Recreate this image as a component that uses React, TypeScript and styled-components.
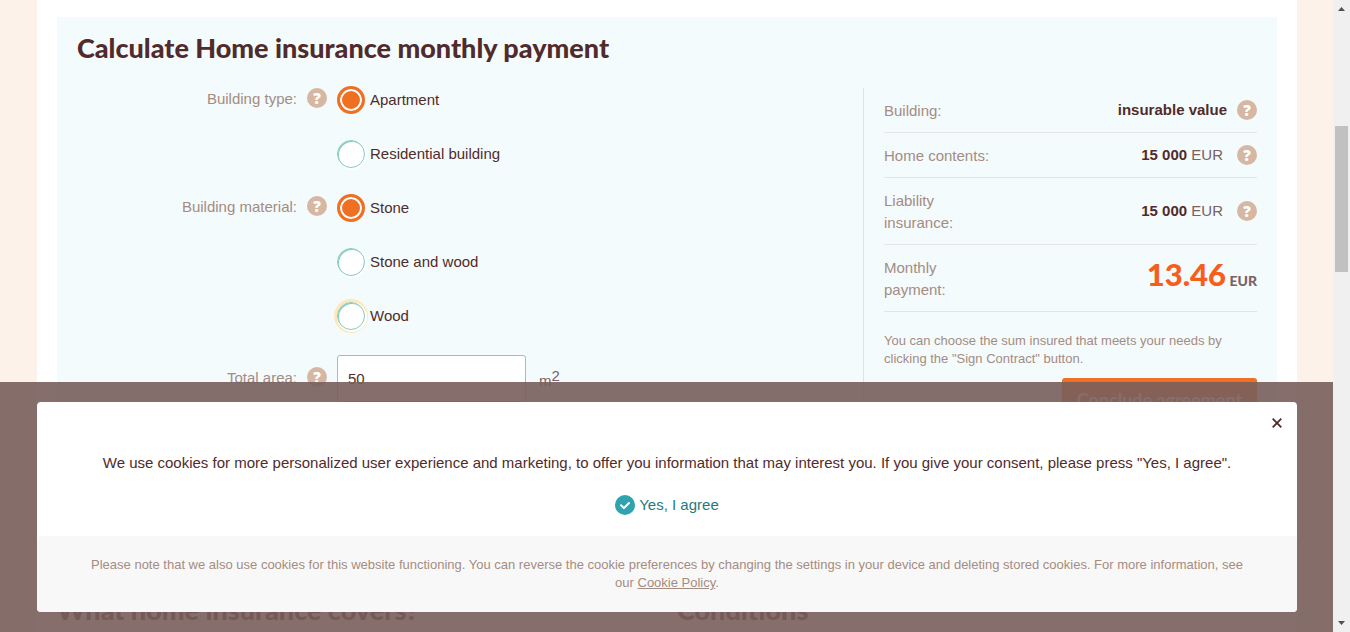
import React, { useState } from "react";
import styled, { createGlobalStyle } from "styled-components";

const body = `"Liberation Sans", Arial, sans-serif`;
const display = `Lato, "Open Sans", sans-serif`;

const GlobalStyle = createGlobalStyle`
  *, *::before, *::after { box-sizing: border-box; }
  body { margin: 0; background: #fcf2e9; font: 15px/22px ${body}; color: #512b2b; }
`;

const Screen = styled.div`
  display: flex;
  height: 100vh;
  overflow: hidden;
`;

const Viewport = styled.div`
  position: relative;
  flex: 1;
  min-width: 0;
  overflow: hidden;
  padding: 0 36px 0 37px;
`;

const Page = styled.main`
  min-height: 100%;
  padding: 17px 20px 0;
  background: #fff;
`;

const Calculator = styled.section`
  min-height: 552px;
  padding: 16px 20px;
  background: #f3fbfd;
`;

const Title = styled.h2`
  margin: 0 0 25px;
  font: 900 27px/30px ${display};
  color: #512b2b;
`;

const Columns = styled.div`
  display: grid;
  grid-template-columns: 1fr 394px;
`;

const Form = styled.form`
  display: flex;
  flex-direction: column;
  margin-top: -2px;
`;

const Field = styled.div`
  display: grid;
  grid-template-columns: 220px 20px 1fr;
  column-gap: 10px;
`;

const FieldLabel = styled.label<{ $low?: boolean }>`
  padding-top: ${(p) => (p.$low ? 11 : 2)}px;
  text-align: right;
  color: #a58c82;
`;

const HelpButton = styled.button<{ $offset?: number }>`
  display: block;
  flex: none;
  width: 20px;
  height: 20px;
  margin: ${(p) => p.$offset ?? 0}px 0 0;
  padding: 0;
  border: 0;
  border-radius: 50%;
  background: #d6b7a3;
  color: #fff;
  font: 800 15px/20px "Open Sans", sans-serif;
  text-align: center;
`;

const Options = styled.div`
  display: flex;
  flex-direction: column;
`;

const Option = styled.label`
  display: flex;
  align-items: center;
  gap: 5px;
  height: 28px;
  margin-bottom: 26px;
`;

const Radio = styled.input<{ $glow?: boolean }>`
  appearance: none;
  flex: none;
  width: 28px;
  height: 28px;
  margin: 0;
  border: 1px solid #86cbc2;
  border-radius: 50%;
  background: #fff;
  box-shadow: inset 1px 1px 0 #86cbc2, 1px 1px 0 1px #fff${(p) => (p.$glow ? ", 0 0 0 3px #ffe8b8" : "")};
  &:checked {
    border: 3px solid #ef7022;
    background: #ef7022;
    box-shadow: inset 0 0 0 2px #fff;
  }
`;

const AreaRow = styled.div`
  display: flex;
  align-items: flex-start;
  gap: 13px;
  margin-top: -1px;
`;

const AreaInput = styled.input`
  width: 189px;
  height: 47px;
  padding: 0 10px;
  border: 1px solid #86cbc2;
  border-radius: 3px;
  background: #fff;
  color: #512b2b;
  font: 15px/22px ${body};
`;

const Unit = styled.span`
  padding-top: 15px;
  color: #7a6162;
  sup { font-size: 15px; line-height: 0; vertical-align: 5px; }
`;

const Summary = styled.aside`
  padding-left: 20px;
  border-left: 1px solid #dde4e5;
`;

const SummaryList = styled.dl`
  margin: 0;
`;

const SummaryRow = styled.div`
  display: flex;
  align-items: center;
  justify-content: space-between;
  padding: 10px 0;
  border-bottom: 1px solid #e4e6e6;
`;

const Term = styled.dt`
  width: 112px;
  padding-top: 2px;
  color: #a58c82;
`;

const Value = styled.dd`
  display: flex;
  align-items: center;
  gap: 10px;
  margin: 0;
  color: #7a6162;
  b { color: #512b2b; }
`;

const Amount = styled.span<{ $currency?: boolean }>`
  padding-right: ${(p) => (p.$currency ? 4 : 0)}px;
`;

const Price = styled.dd`
  align-self: flex-start;
  margin: 0;
  font: 900 14px/38px ${display};
  color: #7a6162;
  b { font-size: 31px; font-weight: 900; color: #f95d1b; }
`;

const Note = styled.p`
  margin: 20px 0 10px;
  font-size: 13px;
  line-height: 18px;
  color: #a58c82;
`;

const Conclude = styled.button`
  display: block;
  width: 195px;
  height: 44px;
  margin: 0 0 0 auto;
  padding: 0;
  border: 0;
  border-radius: 3px;
  background: #ef7022;
  color: #fff;
  font: 700 18px/44px ${display};
`;

const Lower = styled.div`
  display: grid;
  grid-template-columns: 1fr 1fr;
  column-gap: 20px;
  padding-top: 26px;
`;

const LowerTitle = styled.h2`
  margin: 0;
  font: 900 27px/30px ${display};
`;

const CookieShade = styled.div`
  position: absolute;
  inset: auto 0 0;
  padding: 20px 36px 20px 37px;
  background: rgba(120, 94, 92, 0.9);
`;

const CookieBox = styled.section`
  position: relative;
  border-radius: 4px;
  background: #fff;
  text-align: center;
`;

const CookieMain = styled.div`
  padding: 50px 50px 20px;
  p { margin: 0 0 20px; }
`;

const Agree = styled.button`
  display: inline-flex;
  align-items: center;
  gap: 4px;
  height: 22px;
  padding: 0;
  border: 0;
  background: none;
  color: #1f7a80;
  font: 15px/22px ${body};
  vertical-align: top;
`;

const CookieNote = styled.p`
  margin: 0;
  padding: 20px 50px;
  border-radius: 4px;
  background: #f8f8f8;
  color: #a58c82;
  font-size: 13px;
  line-height: 18px;
  a { color: inherit; }
`;

const Close = styled.button`
  position: absolute;
  top: 11px;
  right: 10px;
  display: grid;
  place-items: center;
  width: 20px;
  height: 20px;
  padding: 0;
  border: 0;
  background: none;
`;

const ScrollTrack = styled.div`
  display: flex;
  flex-direction: column;
  align-items: center;
  flex: none;
  width: 17px;
  padding: 7px 0;
  background: #f0f0f0;
`;

const ScrollThumb = styled.div`
  width: 13px;
  height: 146px;
  margin: 115px 0 auto;
  background: #c1c1c1;
`;

const Arrow = ({ down }: { down?: boolean }) => (
  <svg width="7" height="4" viewBox="0 0 7 4" fill="#505050" aria-hidden="true">
    <path d={down ? "M0 0h7L3.5 4z" : "M0 4h7L3.5 0z"} />
  </svg>
);

const Help = ({ topic, offset }: { topic: string; offset?: number }) => (
  <HelpButton type="button" aria-label={`Help: ${topic}`} $offset={offset}>?</HelpButton>
);

type GroupProps = { label: string; name: string; options: string[]; glow?: string };

const RadioField = ({ label, name, options, glow }: GroupProps) => {
  const [value, setValue] = useState(options[0]);
  return (
    <Field role="radiogroup" aria-labelledby={name}>
      <FieldLabel as="span" id={name}>{label}:</FieldLabel>
      <Help topic={label} offset={2} />
      <Options>
        {options.map((o) => (
          <Option key={o}>
            <Radio type="radio" name={name} checked={value === o} onChange={() => setValue(o)} $glow={o === glow} />
            {o}
          </Option>
        ))}
      </Options>
    </Field>
  );
};

export default function App() {
  return (
    <Screen>
      <GlobalStyle />
      <Viewport>
        <Page>
          <Calculator>
            <Title>Calculate Home insurance monthly payment</Title>
            <Columns>
              <Form>
                <RadioField label="Building type" name="type" options={["Apartment", "Residential building"]} />
                <RadioField
                  label="Building material"
                  name="material"
                  options={["Stone", "Stone and wood", "Wood"]}
                  glow="Wood"
                />
                <Field>
                  <FieldLabel htmlFor="area" $low>Total area:</FieldLabel>
                  <Help topic="Total area" offset={11} />
                  <AreaRow>
                    <AreaInput id="area" type="text" defaultValue="50" />
                    <Unit>m<sup>2</sup></Unit>
                  </AreaRow>
                </Field>
              </Form>
              <Summary>
                <SummaryList>
                  <SummaryRow>
                    <Term>Building:</Term>
                    <Value><Amount><b>insurable value</b></Amount><Help topic="Building" /></Value>
                  </SummaryRow>
                  <SummaryRow>
                    <Term>Home contents:</Term>
                    <Value><Amount $currency><b>15 000</b> EUR</Amount><Help topic="Home contents" /></Value>
                  </SummaryRow>
                  <SummaryRow>
                    <Term>Liability insurance:</Term>
                    <Value><Amount $currency><b>15 000</b> EUR</Amount><Help topic="Liability insurance" /></Value>
                  </SummaryRow>
                  <SummaryRow>
                    <Term>Monthly payment:</Term>
                    <Price><b>13.46</b> EUR</Price>
                  </SummaryRow>
                </SummaryList>
                <Note>You can choose the sum insured that meets your needs by clicking the "Sign Contract" button.</Note>
                <Conclude type="button">Conclude agreement</Conclude>
              </Summary>
            </Columns>
          </Calculator>
          <Lower>
            <LowerTitle>What home insurance covers?</LowerTitle>
            <LowerTitle>Conditions</LowerTitle>
          </Lower>
        </Page>
        <CookieShade>
          <CookieBox aria-label="Cookies">
            <CookieMain>
              <p>
                We use cookies for more personalized user experience and marketing, to offer you information that may
                interest you. If you give your consent, please press "Yes, I agree".
              </p>
              <Agree type="button">
                <svg width="20" height="20" viewBox="0 0 20 20" aria-hidden="true">
                  <circle cx="10" cy="10" r="10" fill="#2fa3ae" />
                  <path
                    d="M6 10.2l2.9 2.9 5.1-5.1"
                    fill="none"
                    stroke="#fff"
                    strokeWidth="2"
                    strokeLinecap="round"
                    strokeLinejoin="round"
                  />
                </svg>
                Yes, I agree
              </Agree>
            </CookieMain>
            <CookieNote>
              Please note that we also use cookies for this website functioning. You can reverse the cookie preferences
              by changing the settings in your device and deleting stored cookies. For more information, see our{" "}
              <a href="#cookie-policy">Cookie Policy</a>.
            </CookieNote>
            <Close type="button" aria-label="Close">
              <svg width="10" height="10" viewBox="0 0 10 10" aria-hidden="true">
                <path d="M0.7 0.7l8.6 8.6M9.3 0.7L0.7 9.3" stroke="#512b2b" strokeWidth="1.8" />
              </svg>
            </Close>
          </CookieBox>
        </CookieShade>
      </Viewport>
      <ScrollTrack>
        <Arrow />
        <ScrollThumb />
        <Arrow down />
      </ScrollTrack>
    </Screen>
  );
}
